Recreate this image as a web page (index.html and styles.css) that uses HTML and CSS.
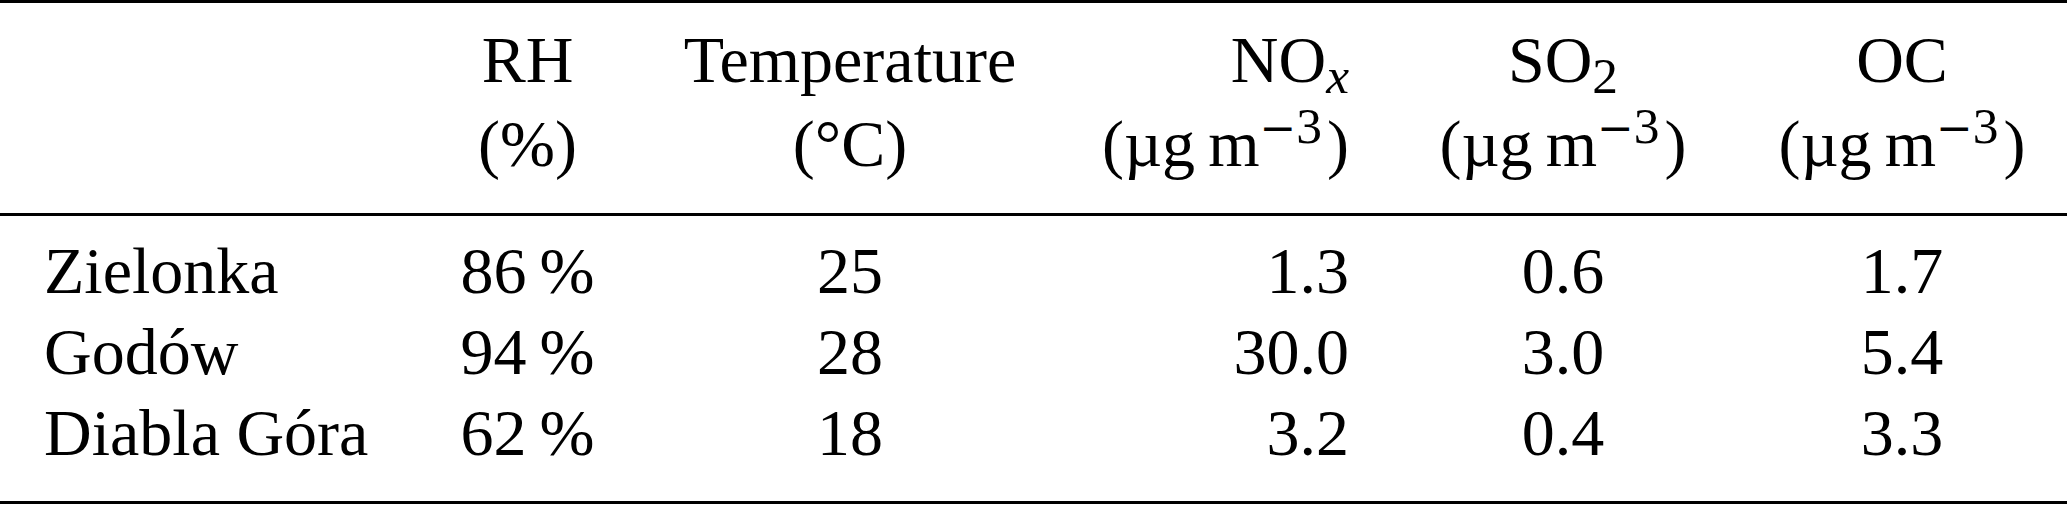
FILE: index.html
```html
<!DOCTYPE html>
<html lang="en">
<head>
<meta charset="utf-8">
<title>Site conditions</title>
<link rel="stylesheet" href="styles.css">
</head>
<body>
<div class="tbl">
  <div class="grp head">
    <div class="cell l"></div>
    <div class="cell c">RH<br>(%)</div>
    <div class="cell c">Temperature<br>(°C)</div>
    <div class="cell r">NO<span class="sub it">x</span><br>(µg&#8201;m<span class="sup"><span class="minus">−</span>3</span>)</div>
    <div class="cell c">SO<span class="sub">2</span><br>(µg&#8201;m<span class="sup"><span class="minus">−</span>3</span>)</div>
    <div class="cell c">OC<br>(µg&#8201;m<span class="sup"><span class="minus">−</span>3</span>)</div>
  </div>
  <div class="grp body">
    <div class="cell l">Zielonka</div>
    <div class="cell c">86&#8201;%</div>
    <div class="cell c">25</div>
    <div class="cell r">1.3</div>
    <div class="cell c">0.6</div>
    <div class="cell c">1.7</div>

    <div class="cell l">Godów</div>
    <div class="cell c">94&#8201;%</div>
    <div class="cell c">28</div>
    <div class="cell r">30.0</div>
    <div class="cell c">3.0</div>
    <div class="cell c">5.4</div>

    <div class="cell l">Diabla Góra</div>
    <div class="cell c">62&#8201;%</div>
    <div class="cell c">18</div>
    <div class="cell r">3.2</div>
    <div class="cell c">0.4</div>
    <div class="cell c">3.3</div>
  </div>
</div>
</body>
</html>
```

FILE: styles.css
```css
html, body {
  margin: 0;
  padding: 0;
  background: #ffffff;
}

body {
  width: 2067px;
  height: 505px;
  overflow: hidden;
  font-family: "Liberation Serif", "Times New Roman", serif;
  font-size: 66px;
  color: #000000;
}

.tbl {
  width: 2067px;
  border-top: 3px solid #000;
  border-bottom: 3px solid #000;
}

.grp {
  display: grid;
  grid-template-columns: 412px 231px 414px 332px 348px 1fr;
}

.head {
  line-height: 84px;
  padding: 15px 0 27px;
  border-bottom: 3px solid #000;
}

.body {
  line-height: 81px;
  padding: 14px 0 28px;
}

.cell {
  padding: 0 40px;
  white-space: nowrap;
}

.cell.l {
  text-align: left;
  padding-left: 44px;
}

.cell.c {
  text-align: center;
}

.cell.r {
  text-align: right;
}

.sub,
.sup {
  font-size: 0.78em;
  line-height: 0;
  position: relative;
}

.sub {
  top: 0.22em;
}

.sup {
  top: -0.45em;
  margin-right: 0.1em;
}

.minus {
  font-family: "DejaVu Serif", serif;
  font-size: 0.85em;
  font-weight: 300;
}

.it {
  font-style: italic;
}
```
